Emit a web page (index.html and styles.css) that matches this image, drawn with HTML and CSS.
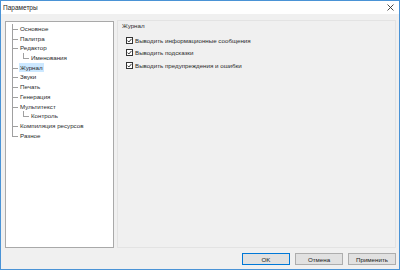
FILE: index.html
```html
<!DOCTYPE html>
<html lang="ru">
<head>
    <meta charset="UTF-8">
    <title>Параметры</title>
    <link rel="stylesheet" href="styles.css">
</head>
<body>
    <div class="window">
        <div class="titlebar">
            <span class="title">Параметры</span>
            <svg class="close" width="7" height="7" viewBox="0 0 7 7">
                <path d="M0.5 0.5L6.5 6.5M6.5 0.5L0.5 6.5" stroke="#333" stroke-width="0.9" fill="none"/>
            </svg>
        </div>
        <div class="client">
            <div class="main">
                <div class="tree-box">
                    <ul class="tree">
                        <li><span class="node">Основное</span></li>
                        <li><span class="node">Палитра</span></li>
                        <li><span class="node">Редактор</span>
                            <ul>
                                <li><span class="node">Именования</span></li>
                            </ul>
                        </li>
                        <li><span class="node selected">Журнал</span></li>
                        <li><span class="node">Звуки</span></li>
                        <li><span class="node">Печать</span></li>
                        <li><span class="node">Генерация</span></li>
                        <li><span class="node">Мультитекст</span>
                            <ul>
                                <li><span class="node">Контроль</span></li>
                            </ul>
                        </li>
                        <li><span class="node">Компиляция ресурсов</span></li>
                        <li><span class="node">Разное</span></li>
                    </ul>
                </div>
                <div class="page">
                    <div class="page-title">Журнал</div>
                    <div class="options">
                        <label class="check"><span class="box"><svg width="5" height="5" viewBox="0 0 5 5"><path d="M0.5 2.6L1.9 4L4.5 0.9" stroke="#222" stroke-width="0.9" fill="none"/></svg></span>Выводить информационные сообщения</label>
                        <label class="check"><span class="box"><svg width="5" height="5" viewBox="0 0 5 5"><path d="M0.5 2.6L1.9 4L4.5 0.9" stroke="#222" stroke-width="0.9" fill="none"/></svg></span>Выводить подсказки</label>
                        <label class="check"><span class="box"><svg width="5" height="5" viewBox="0 0 5 5"><path d="M0.5 2.6L1.9 4L4.5 0.9" stroke="#222" stroke-width="0.9" fill="none"/></svg></span>Выводить предупреждения и ошибки</label>
                    </div>
                </div>
            </div>
            <div class="buttons">
                <button class="default">OK</button>
                <button>Отмена</button>
                <button>Применить</button>
            </div>
        </div>
    </div>
</body>
</html>
```

FILE: styles.css
```css
* {
    box-sizing: border-box;
    margin: 0;
    padding: 0;
}

body {
    font-family: "Liberation Sans", Arial, sans-serif;
    font-size: 6.2px;
    color: #2b2b2b;
    background: #ffffff;
}

.window {
    width: 400px;
    height: 270px;
    border: 1px solid #4a93d6;
    display: flex;
    flex-direction: column;
    background: #f0f0f0;
}

.titlebar {
    height: 13px;
    background: #ffffff;
    display: flex;
    align-items: center;
    justify-content: space-between;
    padding: 0 5px 0 2px;
}

.title {
    font-size: 6.5px;
    color: #222;
}

.client {
    flex: 1;
    display: flex;
    flex-direction: column;
    padding: 6px 3px 4px 4px;
    gap: 5px;
}

.main {
    flex: 1;
    display: flex;
    gap: 3px;
}

.tree-box {
    width: 109px;
    margin-top: 1px;
    background: #ffffff;
    border: 1px solid #a9a9a9;
    padding-top: 2px;
}

.tree {
    list-style: none;
    margin-left: 6px;
}

.tree ul {
    list-style: none;
    margin-left: 4px;
}

.tree li {
    position: relative;
    padding-left: 7px;
}

.tree li::before {
    content: "";
    position: absolute;
    left: 0;
    top: 0;
    width: 5px;
    height: 5px;
    border-left: 1px solid #a0a0a0;
    border-bottom: 1px solid #a0a0a0;
}

.tree li:not(:last-child)::after {
    content: "";
    position: absolute;
    left: 0;
    top: 5px;
    bottom: 0;
    border-left: 1px solid #a0a0a0;
}

.node {
    display: inline-block;
    height: 9.7px;
    line-height: 9.7px;
    padding: 0 1px;
    white-space: nowrap;
}

.node.selected {
    background: #cce8ff;
}

.page {
    flex: 1;
    border: 1px solid #e3e3e3;
    padding: 0 4px;
}

.page-title {
    line-height: 9px;
}

.options {
    display: flex;
    flex-direction: column;
    gap: 4.5px;
    padding: 6px 0 0 4px;
}

.check {
    display: flex;
    align-items: center;
    gap: 2px;
    height: 8px;
}

.box {
    width: 7px;
    height: 7px;
    border: 1px solid #333;
    background: #fff;
    display: flex;
    align-items: center;
    justify-content: center;
}

.buttons {
    display: flex;
    justify-content: flex-end;
    gap: 5px;
}

button {
    width: 48px;
    height: 12px;
    font-family: inherit;
    font-size: 6.2px;
    color: #1a1a1a;
    background: #e1e1e1;
    border: 1px solid #adadad;
}

button.default {
    border-color: #0078d7;
}
```
